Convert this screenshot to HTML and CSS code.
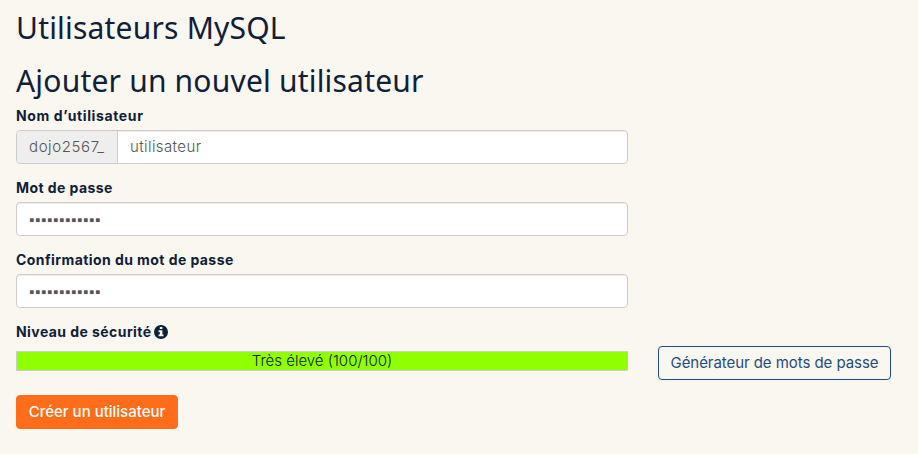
FILE: index.html
```html
<!DOCTYPE html>
<html lang="fr">
<head>
<meta charset="utf-8">
<title>Utilisateurs MySQL</title>
<link rel="stylesheet" href="styles.css">
</head>
<body>
<h1 class="title">Utilisateurs MySQL</h1>
<h2 class="title">Ajouter un nouvel utilisateur</h2>
<form class="form">
  <div class="group">
    <label class="label l-user">Nom d’utilisateur</label>
    <div class="control"><span class="addon">dojo2567_</span><span class="value user">utilisateur</span></div>
  </div>
  <div class="group">
    <label class="label">Mot de passe</label>
    <div class="control"><span class="value dots">▪▪▪▪▪▪▪▪▪▪▪▪</span></div>
  </div>
  <div class="group">
    <label class="label">Confirmation du mot de passe</label>
    <div class="control"><span class="value dots">▪▪▪▪▪▪▪▪▪▪▪▪</span></div>
  </div>
  <label class="label">Niveau de sécurité
    <svg class="info" viewBox="0 0 14 14"><circle cx="7" cy="7" r="7" fill="#0d2136"/><path fill="#faf7f0" d="M5.8 2h2.6v2.1H5.8zM4.6 5.2h3.8v4.2h1.1v1.9H4.6V9.4h1.2V7H4.6z"/></svg>
  </label>
  <div class="strength">
    <div class="meter">Très élevé (100/100)</div>
    <button type="button" class="btn outline">Générateur de mots de passe</button>
  </div>
  <button type="button" class="btn primary">Créer un utilisateur</button>
</form>
</body>
</html>
```
FILE: styles.css
```css
* { box-sizing: border-box; }
body {
  margin: 0;
  padding: 11px 16px;
  background: #faf7f0;
  color: #0f2038;
  font: 300 15px/20px Inter, "Open Sans", sans-serif;
}
.title {
  margin: 0 0 20px;
  font: 400 30px/33px "Noto Sans", "Open Sans", sans-serif;
  letter-spacing: .2px;
}
h2.title { margin-bottom: 9px; }
.form { display: flex; flex-direction: column; align-items: flex-start; }
.group { width: 612px; margin-bottom: 14px; }
.label { display: block; margin-bottom: 4px; font-size: 14px; font-weight: 700; letter-spacing: .43px; white-space: nowrap; }
.l-user { letter-spacing: .62px; }
.control {
  display: flex;
  height: 34px;
  border: 1px solid #ccc;
  border-radius: 4px;
  background: #fff;
  box-shadow: inset 0 1px 1px rgba(0, 0, 0, .075);
  line-height: 32px;
  color: #555;
  overflow: hidden;
}
.addon { width: 101px; padding-left: 12px; background: #eee; border-right: 1px solid #ccc; letter-spacing: .6px; }
.value { padding-left: 12px; }
.user { letter-spacing: .4px; }
.dots { padding-top: 1px; font-family: "DejaVu Sans", sans-serif; font-size: 15px; letter-spacing: .68px; }
.info { width: 14px; height: 14px; vertical-align: -2px; margin-left: -1px; }
.strength { display: flex; gap: 30px; height: 34px; margin-bottom: 15px; }
.meter {
  width: 612px;
  height: 20px;
  margin-top: 5px;
  border: 1px solid #ccc;
  background: #90ff00;
  text-align: center;
  line-height: 18px;
}
.btn {
  height: 34px;
  padding: 0;
  border: 1px solid #1f4c80;
  border-radius: 4px;
  font: 400 15px/20px Inter, sans-serif;
  letter-spacing: -.06px;
  white-space: nowrap;
}
.outline { width: 233px; background: transparent; color: #1f4c80; }
.primary { width: 162px; background: #ff6c1a; border-color: #ff6c1a; color: #fff; font-weight: 500; letter-spacing: 0; }
```
